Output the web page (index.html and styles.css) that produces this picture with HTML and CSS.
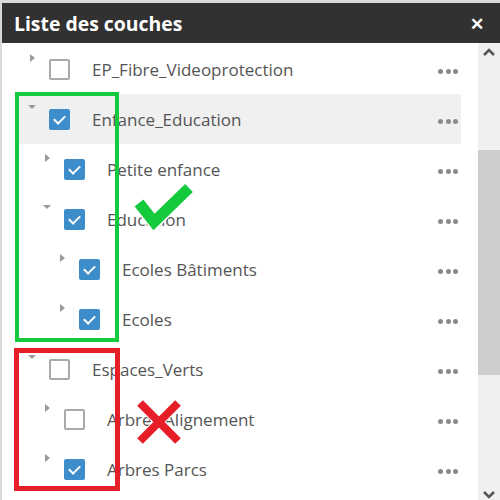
FILE: index.html
```html
<!DOCTYPE html>
<html lang="fr">
<head>
    <meta charset="UTF-8">
    <title>Liste des couches</title>
    <link rel="stylesheet" href="styles.css">
</head>
<body>
    <div class="panel">
        <!-- Header -->
        <div class="panel-header">
            <span class="panel-title">Liste des couches</span>
            <span class="panel-close">&#x2715;</span>
        </div>

        <div class="panel-body">
            <ul class="layers">
                <li class="layer lvl0">
                    <span class="toggle closed"></span>
                    <span class="box"></span>
                    <span class="name">EP_Fibre_Videoprotection</span>
                    <span class="more"><i></i><i></i><i></i></span>
                </li>
                <li class="layer lvl0 active">
                    <span class="toggle open"></span>
                    <span class="box checked"></span>
                    <span class="name">Enfance_Education</span>
                    <span class="more"><i></i><i></i><i></i></span>
                </li>
                <li class="layer lvl1">
                    <span class="toggle closed"></span>
                    <span class="box checked"></span>
                    <span class="name">Petite enfance</span>
                    <span class="more"><i></i><i></i><i></i></span>
                </li>
                <li class="layer lvl1">
                    <span class="toggle open"></span>
                    <span class="box checked"></span>
                    <span class="name">Education</span>
                    <span class="more"><i></i><i></i><i></i></span>
                </li>
                <li class="layer lvl2">
                    <span class="toggle closed"></span>
                    <span class="box checked"></span>
                    <span class="name">Ecoles Bâtiments</span>
                    <span class="more"><i></i><i></i><i></i></span>
                </li>
                <li class="layer lvl2">
                    <span class="toggle closed"></span>
                    <span class="box checked"></span>
                    <span class="name">Ecoles</span>
                    <span class="more"><i></i><i></i><i></i></span>
                </li>
                <li class="layer lvl0">
                    <span class="toggle open"></span>
                    <span class="box"></span>
                    <span class="name">Espaces_Verts</span>
                    <span class="more"><i></i><i></i><i></i></span>
                </li>
                <li class="layer lvl1">
                    <span class="toggle closed"></span>
                    <span class="box"></span>
                    <span class="name">Arbres Alignement</span>
                    <span class="more"><i></i><i></i><i></i></span>
                </li>
                <li class="layer lvl1">
                    <span class="toggle closed"></span>
                    <span class="box checked"></span>
                    <span class="name">Arbres Parcs</span>
                    <span class="more"><i></i><i></i><i></i></span>
                </li>
            </ul>

            <!-- Scrollbar -->
            <div class="scrollbar">
                <svg class="arrow up" width="14" height="10" viewBox="0 0 14 10"><polyline points="2,8 7,3 12,8" fill="none" stroke="#555" stroke-width="2.6"/></svg>
                <div class="thumb"></div>
                <svg class="arrow down" width="14" height="10" viewBox="0 0 14 10"><polyline points="2,2 7,7 12,2" fill="none" stroke="#555" stroke-width="2.6"/></svg>
            </div>

            <!-- Annotations drawn over the list -->
            <div class="mark green-box"></div>
            <div class="mark red-box"></div>
            <svg class="mark ok" width="66" height="56" viewBox="0 0 66 56">
                <polyline points="8,21 23,40 58,6" fill="none" stroke="#fff" stroke-width="14"/>
                <polyline points="8,21 23,40 58,6" fill="none" stroke="#14c93c" stroke-width="11"/>
            </svg>
            <svg class="mark ko" width="50" height="48" viewBox="0 0 50 48">
                <path d="M6 4 L44 42 M44 4 L6 42" fill="none" stroke="#fff" stroke-width="10"/>
                <path d="M6 4 L44 42 M44 4 L6 42" fill="none" stroke="#e61e27" stroke-width="8"/>
            </svg>
        </div>
    </div>
</body>
</html>
```

FILE: styles.css
```css
body {
    margin: 0;
    padding: 3px 0 0 2px;
    background-color: #d9d9d9;
    font-family: 'Open Sans', sans-serif;
    height: 500px;
    box-sizing: border-box;
    overflow: hidden;
}

.panel {
    background-color: #fff;
    height: 497px;
    display: flex;
    flex-direction: column;
}

.panel-header {
    height: 40px;
    background-color: #313131;
    color: #fff;
    display: flex;
    align-items: center;
    justify-content: space-between;
    padding: 0 16px 0 12px;
    flex-shrink: 0;
}

.panel-title {
    font-size: 19.4px;
    font-weight: bold;
}

.panel-close {
    font-size: 17px;
    font-weight: bold;
}

.panel-body {
    position: relative;
    flex: 1;
    display: flex;
    overflow: hidden;
}

.layers {
    list-style: none;
    margin: 0;
    padding: 1px 0 0 15px;
    width: 444px;
}

.layer {
    height: 50px;
    display: flex;
    align-items: center;
    padding-right: 3px;
    color: #555;
    font-size: 17px;
}

.layer.active {
    background-color: #f0f0f0;
}

.lvl1 { padding-left: 15px; }
.lvl2 { padding-left: 30px; }

.toggle {
    width: 8px;
    margin-left: 11px;
    align-self: flex-start;
    display: flex;
    justify-content: center;
}

.toggle.closed::before {
    content: "";
    margin-top: 10px;
    border-left: 5px solid #9a9a9a;
    border-top: 4px solid transparent;
    border-bottom: 4px solid transparent;
}

.toggle.open::before {
    content: "";
    margin-top: 11px;
    border-top: 4px solid #9a9a9a;
    border-left: 4px solid transparent;
    border-right: 4px solid transparent;
}

.box {
    width: 21px;
    height: 21px;
    margin-left: 13px;
    box-sizing: border-box;
    border: 2px solid #a9a9a9;
    border-radius: 2px;
    background-color: #fff;
    flex-shrink: 0;
    position: relative;
}

.box.checked {
    border-color: #3d8dcb;
    background-color: #3d8dcb;
}

.box.checked::after {
    content: "";
    position: absolute;
    left: 5px;
    top: 2px;
    width: 5px;
    height: 9px;
    border-right: 2px solid #fff;
    border-bottom: 2px solid #fff;
    transform: rotate(45deg);
}

.name {
    margin-left: 22px;
    flex: 1;
    white-space: nowrap;
}

.more {
    display: flex;
    gap: 2.5px;
    margin-top: 4px;
}

.more i {
    width: 5px;
    height: 5px;
    border-radius: 50%;
    background-color: #8a8a8a;
}

.scrollbar {
    margin-left: auto;
    width: 22px;
    background-color: #f0f0f0;
    display: flex;
    flex-direction: column;
    align-items: center;
}

.scrollbar .arrow.up {
    margin-top: 4px;
}

.scrollbar .thumb {
    align-self: stretch;
    background-color: #cdcdcd;
    height: 226px;
    margin-top: 93px;
}

.scrollbar .arrow.down {
    margin-top: 115px;
}

/* annotations */
.mark {
    position: absolute;
}

.green-box {
    left: 13px;
    top: 49px;
    width: 104px;
    height: 250px;
    box-sizing: border-box;
    border: 4px solid #14c93c;
}

.red-box {
    left: 12px;
    top: 305px;
    width: 106px;
    height: 143px;
    box-sizing: border-box;
    border: 5px solid #e61e27;
}

.ok {
    left: 129px;
    top: 139px;
}

.ko {
    left: 132px;
    top: 356px;
}
```
